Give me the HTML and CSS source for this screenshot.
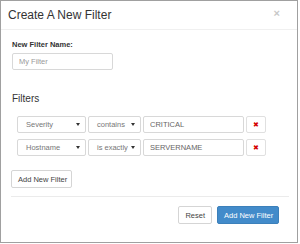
FILE: index.html
```html
<!DOCTYPE html>
<html lang="en">
<head>
    <meta charset="UTF-8">
    <meta name="viewport" content="width=device-width, initial-scale=1.0">
    <title>Create A New Filter</title>
    <link rel="stylesheet" href="styles.css">
</head>
<body>
    <div class="modal">
        <div class="modal-header">
            <div class="modal-title">Create A New Filter</div>
            <span class="close">&times;</span>
        </div>

        <div class="modal-body">
            <label class="form-label">New Filter Name:</label>
            <input class="form-input name-input" type="text" placeholder="My Filter">

            <div class="section-title">Filters</div>

            <div class="filter-row">
                <div class="form-select field-select">Severity<span class="caret"></span></div>
                <div class="form-select op-select">contains<span class="caret"></span></div>
                <input class="form-input value-input" type="text" value="CRITICAL">
                <button class="delete-button">&#10006;</button>
            </div>
            <div class="filter-row">
                <div class="form-select field-select">Hostname<span class="caret"></span></div>
                <div class="form-select op-select">is exactly<span class="caret"></span></div>
                <input class="form-input value-input" type="text" value="SERVERNAME">
                <button class="delete-button">&#10006;</button>
            </div>

            <button class="button add-row">Add New Filter</button>
        </div>

        <div class="modal-footer">
            <button class="button">Reset</button>
            <button class="button button-primary">Add New Filter</button>
        </div>
    </div>
</body>
</html>
```

FILE: styles.css
```css
body {
    font-family: "Liberation Sans", Arial, sans-serif;
    background-color: #ffffff;
    color: #333333;
    margin: 0;
    padding: 0;
}

.modal {
    width: 296px;
    height: 241px;
    border: 1px solid #a0a0a0;
    background-color: #ffffff;
}

.modal-header {
    display: flex;
    justify-content: space-between;
    align-items: center;
    height: 28px;
    padding: 0 17px 0 7px;
    border-bottom: 1px solid #f0f0f0;
}

.modal-title {
    font-size: 12px;
    color: #333333;
}

.close {
    font-size: 11px;
    color: #c8c8c8;
    font-weight: bold;
    line-height: 1;
    margin-bottom: 4px;
}

.modal-body {
    padding: 10px 10px 0 10px;
}

.form-label {
    display: block;
    font-size: 7.5px;
    font-weight: bold;
    line-height: 10px;
    margin: 0 0 3px 1px;
}

.form-input {
    box-sizing: border-box;
    display: block;
    font-family: inherit;
    font-size: 7.5px;
    color: #666666;
    height: 17px;
    padding: 0 6px;
    border: 1px solid #d8d8d8;
    border-radius: 2px;
    outline: none;
}

.name-input {
    width: 101px;
    margin-left: 1px;
}

.name-input::placeholder {
    color: #999999;
}

.section-title {
    font-size: 10px;
    line-height: 13px;
    margin: 22px 0 11px 1px;
}

.filter-row {
    display: flex;
    gap: 2px;
    margin: 0 0 6px 6px;
}

.form-select {
    box-sizing: border-box;
    display: flex;
    justify-content: space-between;
    align-items: center;
    height: 17px;
    padding: 0 5px 0 8px;
    font-size: 7.5px;
    color: #777777;
    white-space: nowrap;
    border: 1px solid #d8d8d8;
    border-radius: 2px;
}

.caret {
    width: 0;
    height: 0;
    border-left: 2px solid transparent;
    border-right: 2px solid transparent;
    border-top: 3px solid #333333;
}

.field-select {
    width: 69px;
}

.op-select {
    width: 53px;
}

.value-input {
    width: 101px;
}

.delete-button {
    box-sizing: border-box;
    width: 20px;
    height: 17px;
    padding: 0;
    font-size: 7px;
    color: #d40000;
    background-color: #ffffff;
    border: 1px solid #e0e0e0;
    border-radius: 2px;
}

.button {
    box-sizing: border-box;
    height: 18px;
    padding: 0 6px;
    font-family: inherit;
    font-size: 7.5px;
    color: #444444;
    white-space: nowrap;
    background-color: #ffffff;
    border: 1px solid #d5d5d5;
    border-radius: 2px;
    cursor: pointer;
}

.add-row {
    display: block;
    margin-top: 14px;
    width: 61px;
}

.modal-footer {
    display: flex;
    justify-content: flex-end;
    gap: 5px;
    margin: 8px 8px 0 10px;
    padding: 9px 10px 0 0;
    border-top: 1px solid #ebebeb;
}

.button-primary {
    color: #ffffff;
    background-color: #428bca;
    border-color: #3c80ba;
    width: 62px;
}
```
